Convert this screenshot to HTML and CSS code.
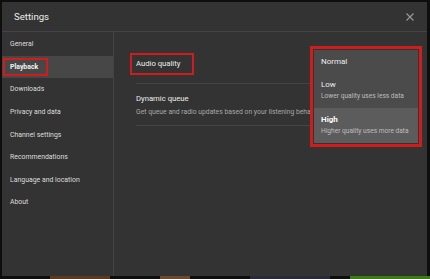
FILE: index.html
```html
<!DOCTYPE html>
<html lang="en">
<head>
  <meta charset="UTF-8" />
  <title>Settings</title>
  <link rel="stylesheet" href="styles.css">
</head>
<body>
  <div class="dialog">
    <div class="dialog-header">
      <h2>Settings</h2>
      <button class="close-btn" aria-label="Close">
        <svg width="8" height="8" viewBox="0 0 8 8"><path d="M0.5 0.5L7.5 7.5M7.5 0.5L0.5 7.5" stroke="#9a9a9a" stroke-width="1.1"/></svg>
      </button>
    </div>
    <div class="dialog-body">
      <nav class="sidebar">
        <div class="nav-item">General</div>
        <div class="nav-item active"><span class="mark">Playback</span></div>
        <div class="nav-item">Downloads</div>
        <div class="nav-item">Privacy and data</div>
        <div class="nav-item">Channel settings</div>
        <div class="nav-item">Recommendations</div>
        <div class="nav-item">Language and location</div>
        <div class="nav-item">About</div>
      </nav>
      <section class="content">
        <div class="row row-first">
          <span class="row-title mark">Audio quality</span>
        </div>
        <div class="row">
          <div class="row-title">Dynamic queue</div>
          <div class="row-desc">Get queue and radio updates based on your listening behaviour</div>
        </div>

        <div class="menu-frame">
          <ul class="menu">
            <li class="menu-item short">Normal</li>
            <li class="menu-item">Low<small>Lower quality uses less data</small></li>
            <li class="menu-item selected">High<small>Higher quality uses more data</small></li>
          </ul>
        </div>
      </section>
    </div>
  </div>
  <div class="backdrop-strip">
    <span class="b1"></span><span class="b2"></span><span class="b3"></span><span class="b4"></span>
  </div>
</body>
</html>
```

FILE: styles.css
```css
body, html {
  margin: 0;
  padding: 0;
  height: 100%;
  background: #0e0e0e;
  font-family: Roboto, 'Liberation Sans', sans-serif;
  color: #e6e6e6;
  overflow: hidden;
}

.dialog {
  margin: 2px 3px 0 2px;
  height: 274px;
  background: #333333;
  display: flex;
  flex-direction: column;
}

.dialog-header {
  height: 29px;
  border-bottom: 1px solid #444;
  display: flex;
  align-items: center;
  justify-content: space-between;
  padding: 0 13px 0 12px;
}

.dialog-header h2 {
  margin: 0;
  font-size: 9.6px;
  font-weight: 400;
  color: #ececec;
}

.close-btn {
  background: none;
  border: none;
  padding: 0;
  width: 8px;
  height: 8px;
  display: flex;
}

.dialog-body {
  flex: 1;
  display: flex;
}

.sidebar {
  width: 111px;
  border-right: 1px solid #434343;
  padding-top: 1px;
}

.nav-item {
  height: 22.6px;
  display: flex;
  align-items: center;
  padding-left: 8px;
  font-size: 6.9px;
  color: #dcdcdc;
}

.nav-item.active {
  background: #474747;
  font-weight: 700;
  color: #f2f2f2;
}

.nav-item .mark {
  padding: 3px 8px 3px 5px;
  margin-left: -7px;
}

.mark {
  display: inline-block;
  border: 2px solid #d01c1c;
}

.content {
  flex: 1;
  position: relative;
  padding: 0 9px 0 22px;
}

.row {
  border-bottom: 1px solid #444;
  padding: 9px 0 8px;
}

.row-first {
  padding: 19px 0 8px;
}

.row-title {
  font-size: 7.7px;
  line-height: 12px;
  color: #ececec;
}

.row-first .row-title {
  padding: 3px 12px 3px 4px;
  margin-left: -6px;
}

.row-desc {
  font-size: 6.8px;
  line-height: 10px;
  color: #a8a8a8;
  margin-top: 2px;
  white-space: nowrap;
  overflow: hidden;
}

.menu-frame {
  position: absolute;
  top: 14px;
  right: 5px;
  width: 104px;
  border: 3px solid #d01c1c;
  padding: 1px;
  background: #333;
}

.menu {
  list-style: none;
  margin: 0;
  padding: 0;
  background: #4b4b4b;
}

.menu-item {
  height: 35px;
  box-sizing: border-box;
  padding: 6px 0 0 7px;
  font-size: 8px;
  line-height: 12px;
  color: #ededed;
}

.menu-item.short {
  height: 23px;
}

.menu-item small {
  display: block;
  font-size: 6.6px;
  line-height: 10px;
  color: #bdbdbd;
}

.menu-item.selected {
  background: #5c5c5c;
  font-weight: 700;
  color: #fafafa;
}

.menu-item.selected small {
  font-weight: 400;
}

.backdrop-strip {
  display: flex;
  height: 3px;
}

.backdrop-strip span {
  display: block;
  height: 3px;
}

.b1 { width: 60px; margin-left: 50px; background: #5a3a22; }
.b2 { width: 30px; margin-left: 50px; background: #6a4a30; }
.b3 { width: 80px; margin-left: 60px; background: #2a2a3a; }
.b4 { width: 80px; margin-left: 20px; background: #3f7a18; }
```
